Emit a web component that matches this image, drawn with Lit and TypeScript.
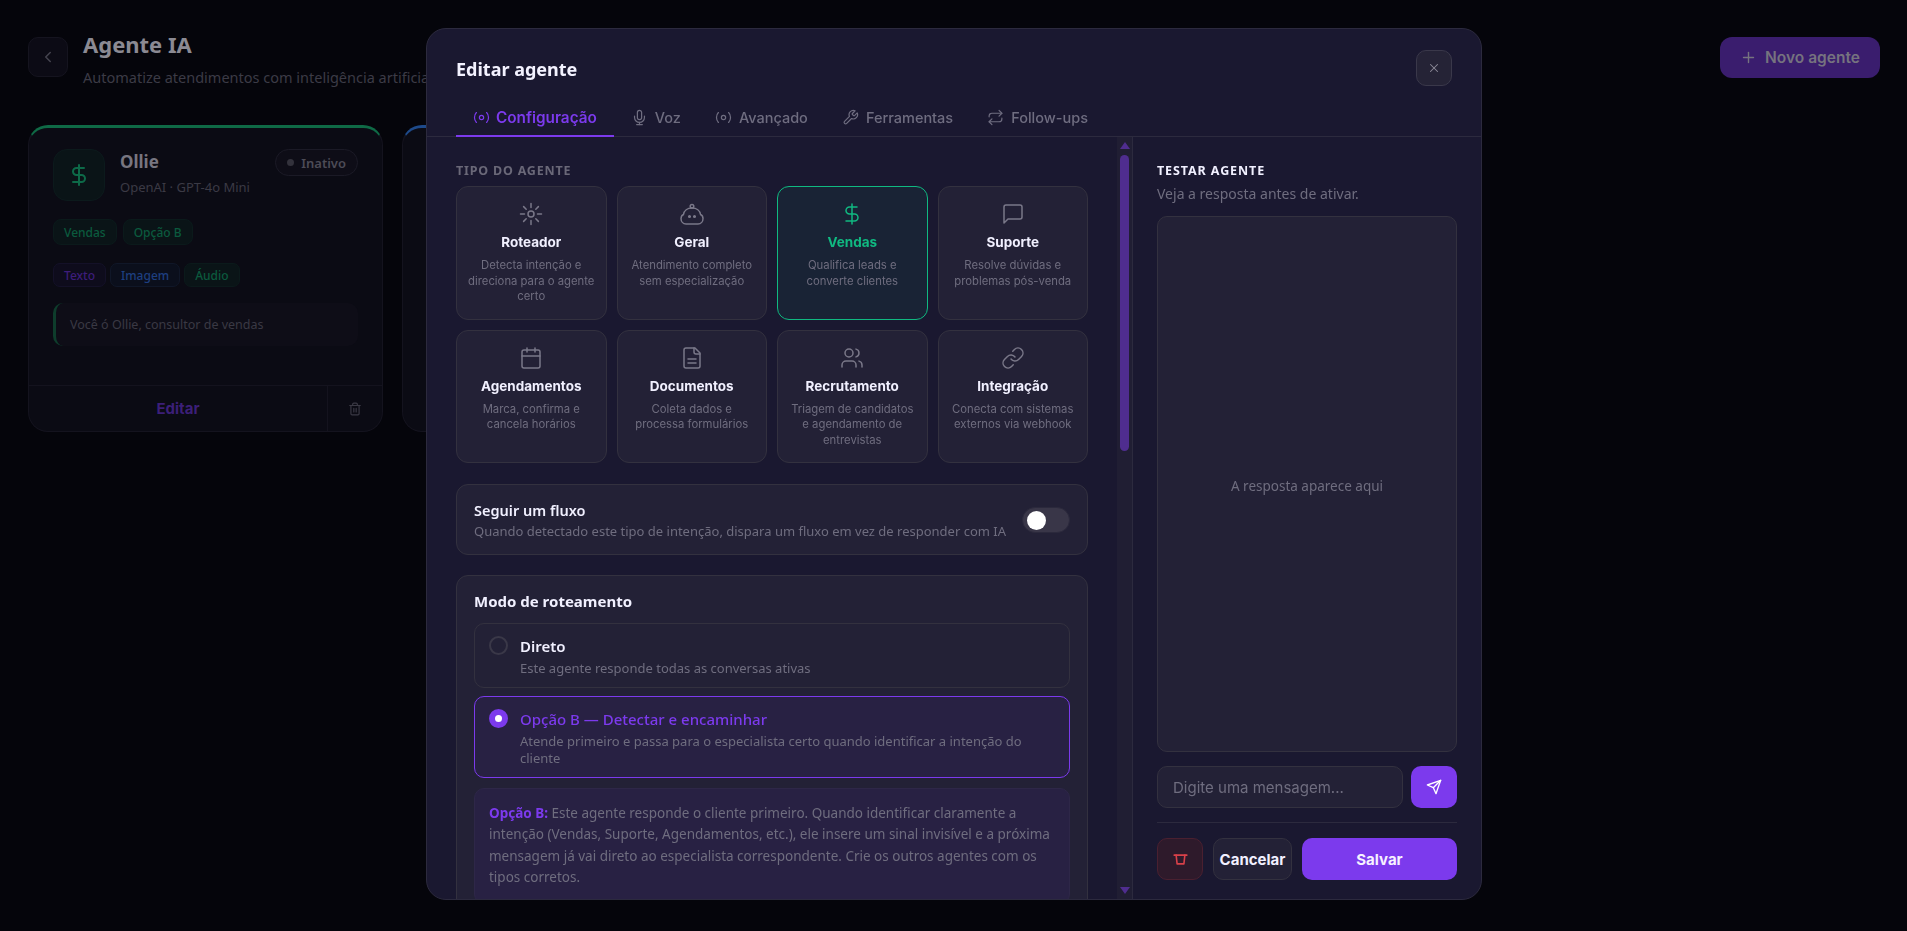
import { LitElement, html, css, svg } from "lit";
import { customElement } from "lit/decorators.js";

const I = {
  radio: svg`<circle cx="12" cy="12" r="3"/><path d="M4.800 5c-3.600 3.600-3.600 10.400 0 14"/><path d="M19.200 5c3.600 3.600 3.600 10.400 0 14"/>`,
  mic: svg`<path d="M12 2a3 3 0 0 0-3 3v7a3 3 0 0 0 6 0V5a3 3 0 0 0-3-3Z"/><path d="M19 10v2a7 7 0 0 1-14 0v-2"/><path d="M12 19v3"/><path d="M8 22h8"/>`,
  wrench: svg`<path d="M14.700 6.300a1 1 0 0 0 0 1.400l1.600 1.600a1 1 0 0 0 1.400 0l3.770-3.770a6 6 0 0 1-7.940 7.940l-6.910 6.910a2.120 2.120 0 0 1-3-3l6.910-6.910a6 6 0 0 1 7.940-7.940l-3.760 3.760z"/>`,
  repeat: svg`<path d="m17 2 4 4-4 4"/><path d="M3 11v-1a4 4 0 0 1 4-4h14"/><path d="m7 22-4-4 4-4"/><path d="M21 13v1a4 4 0 0 1-4 4H3"/>`,
  sun: svg`<circle cx="12" cy="12" r="3"/><path d="M12 1.500v4M12 18.500v4M1.500 12h4M18.500 12h4M4.600 4.600l2.600 2.600M16.800 16.800l2.600 2.600M4.600 19.400l2.600-2.600M16.800 7.200l2.600-2.600"/>`,
  robot: svg`<circle cx="12" cy="4.200" r="1.800"/><path d="M3.500 12.500C4 8.500 7.500 6 12 6s8 2.500 8.500 6.500c1.300.6 2.500 1.800 2.500 4 0 3-2 5.500-5 5.500H6c-3 0-5-2.500-5-5.500 0-2.200 1.200-3.400 2.500-4z"/><circle cx="9.500" cy="14.500" r=".8" class="dot"/><circle cx="14.500" cy="14.500" r=".8" class="dot"/>`,
  dollar: svg`<path d="M12 2v20"/><path d="M17 5H9.500a3.500 3.500 0 0 0 0 7h5a3.500 3.500 0 0 1 0 7H6"/>`,
  msg: svg`<path d="M21 15a2 2 0 0 1-2 2H7l-4 4V5a2 2 0 0 1 2-2h14a2 2 0 0 1 2 2z"/>`,
  cal: svg`<rect x="3" y="4" width="18" height="18" rx="2"/><path d="M8 2v4M16 2v4M3 10h18"/>`,
  file: svg`<path d="M15 2H6a2 2 0 0 0-2 2v16a2 2 0 0 0 2 2h12a2 2 0 0 0 2-2V7Z"/><path d="M14 2v4a2 2 0 0 0 2 2h4"/><path d="M16 13H8"/><path d="M16 17H8"/>`,
  users: svg`<path d="M16 21v-2a4 4 0 0 0-4-4H6a4 4 0 0 0-4 4v2"/><circle cx="9" cy="7" r="4"/><path d="M22 21v-2a4 4 0 0 0-3-3.870"/><path d="M16 3.130a4 4 0 0 1 0 7.750"/>`,
  link: svg`<path d="M10 13a5 5 0 0 0 7.540.540l3-3a5 5 0 0 0-7.070-7.070l-1.720 1.710"/><path d="M14 11a5 5 0 0 0-7.540-.540l-3 3a5 5 0 0 0 7.070 7.070l1.710-1.710"/>`,
  x: svg`<path d="M18 6 6 18"/><path d="m6 6 12 12"/>`,
  send: svg`<path d="m22 2-7 20-4-9-9-4Z"/><path d="M22 2 11 13"/>`,
  cup: svg`<path d="M4 6.500h16"/><path d="M6.500 6.500l1.200 11h8.600l1.200-11"/>`,
  chevron: svg`<path d="m15 18-6-6 6-6"/>`,
  plus: svg`<path d="M5 12h14"/><path d="M12 5v14"/>`,
  trash: svg`<path d="M3 6h18"/><path d="M19 6v14a2 2 0 0 1-2 2H7a2 2 0 0 1-2-2V6"/><path d="M8 6V4a2 2 0 0 1 2-2h4a2 2 0 0 1 2 2v2"/><path d="M10 11v6M14 11v6"/>`,
};

const icon = (p: unknown, size: number, sw = 2) =>
  html`<svg class="ic" width=${size} height=${size} viewBox="0 0 24 24" fill="none" stroke="currentColor" stroke-width=${sw} stroke-linecap="round" stroke-linejoin="round">${p}</svg>`;

const TABS = [
  ["Configuração", I.radio],
  ["Voz", I.mic],
  ["Avançado", I.radio],
  ["Ferramentas", I.wrench],
  ["Follow-ups", I.repeat],
] as const;

const TYPES = [
  ["Roteador", "Detecta intenção e direciona para o agente certo", I.sun],
  ["Geral", "Atendimento completo sem especialização", I.robot],
  ["Vendas", "Qualifica leads e converte clientes", I.dollar],
  ["Suporte", "Resolve dúvidas e problemas pós-venda", I.msg],
  ["Agendamentos", "Marca, confirma e cancela horários", I.cal],
  ["Documentos", "Coleta dados e processa formulários", I.file],
  ["Recrutamento", "Triagem de candidatos e agendamento de entrevistas", I.users],
  ["Integração", "Conecta com sistemas externos via webhook", I.link],
] as const;

@customElement("app-root")
export class AppRoot extends LitElement {
  static styles = css`
    :host {
      display: block;
      height: 931px;
      overflow: hidden;
      background: #05050b;
      font-family: "Noto Sans", sans-serif;
      color: #f1f0ff;
    }
    * { box-sizing: border-box; }
    .ic { display: block; flex: none; }
    .ic .dot { fill: currentColor; }

    /* page behind the dialog */
    .page { padding: 37px 27px 0 28px; }
    .top { display: flex; align-items: flex-start; gap: 15px; }
    .back {
      width: 40px; height: 40px; border-radius: 10px; background: #0c0b15; border: 1px solid #15141f;
      display: flex; align-items: center; justify-content: center; color: #45444f;
    }
    .head { flex: 1; margin-top: -8px; }
    .head h1 { margin: 0; font-size: 22px; line-height: 30px; font-weight: 700; color: #8b8a93; }
    .head p { margin: 8px 0 0; font-size: 14.500px; line-height: 20px; color: #3c3b46; }
    .new {
      width: 160px; height: 41px; border-radius: 12px; background: #3a1d6e; color: #76737f;
      display: flex; align-items: center; justify-content: center; gap: 8px;
      font: 600 15.500px "Inter", sans-serif;
    }
    .cards { display: grid; grid-template-columns: 355px 355px; gap: 19px; margin-top: 38px; }
    .card {
      height: 307px; border-radius: 20px; background: #0b0b14; border: 1px solid #14131e;
      border-top: 3px solid #0f6a46; display: flex; flex-direction: column;
    }
    .card.blue { border-top-color: #1e4a8a; }
    .card-main { flex: 1; padding: 21px 24px 0; }
    .who { display: flex; gap: 15px; align-items: flex-start; }
    .avatar {
      width: 52px; height: 52px; border-radius: 14px; background: #0a1417; border: 1px solid #0c1a1c;
      display: flex; align-items: center; justify-content: center; color: #0d6a48;
    }
    .who-text { flex: 1; }
    .who-text b { display: block; font-size: 17px; line-height: 24px; margin-top: 1px; color: #787680; }
    .who-text span { display: block; font-size: 13px; line-height: 20px; margin-top: 3px; color: #3b3a45; }
    .badge {
      height: 27px; padding: 0 11px; border-radius: 14px; border: 1px solid #1b1a26; background: #0e0d17;
      display: flex; align-items: center; gap: 7px; font-size: 13px; font-weight: 600; color: #4c4b56;
    }
    .badge i { width: 7px; height: 7px; border-radius: 50%; background: #33323c; }
    .tags { display: flex; gap: 6px; margin-top: 18px; }
    .tag {
      height: 26px; padding: 0 10px; border-radius: 8px; font-size: 12px; display: flex; align-items: center;
      color: #0b5a3e; background: #0a1417; border: 1px solid #0b1a1b; font-weight: 500;
    }
    .tags.small { gap: 4px; margin-top: 18px; }
    .tags.small .tag { height: 24px; padding: 0 10px; border-radius: 7px; }
    .tag.p { color: #3d1d7a; background: #0e0c1c; border-color: #141128; }
    .tag.b { color: #1e3f80; background: #0b0f1c; border-color: #101728; }
    .prompt {
      margin-top: 16px; height: 43px; border-radius: 10px; background: #0e0d17; border-left: 3px solid #0e3d2c;
      padding-left: 14px; display: flex; align-items: center; font-size: 12.500px; color: #3a3944;
    }
    .card-foot { height: 46px; border-top: 1px solid #14131e; display: flex; }
    .edit {
      flex: 1; display: flex; align-items: center; justify-content: center; color: #3c1f78;
      font: 700 15px "Inter", sans-serif;
    }
    .del { width: 55px; border-left: 1px solid #14131e; display: flex; align-items: center; justify-content: center; color: #3b3a45; }

    /* dialog */
    .modal {
      position: fixed; left: 426px; top: 28px; width: 1056px; height: 872px;
      background: #1a1830; border: 1px solid #2c2a3e; border-radius: 20px; overflow: hidden;
      display: flex; flex-direction: column;
    }
    .m-head { display: flex; align-items: flex-start; justify-content: space-between; padding: 21px 29px 0; }
    .m-head h2 { margin: 0; padding-top: 7px; font-size: 18px; line-height: 24px; font-weight: 700; color: #f3f2ff; }
    .close {
      width: 36px; height: 36px; border-radius: 10px; background: #252336; border: 1px solid #3a384a;
      display: flex; align-items: center; justify-content: center; color: #8c8a99;
    }
    .tabs { display: flex; padding: 0 29px; border-bottom: 1px solid #2c2a3e; margin-top: 16px; height: 35px; }
    .tab {
      display: flex; align-items: center; gap: 7px; padding: 0 17px 2px; color: #6f6d80; margin-bottom: -1px;
      font: 500 14.500px "Inter", sans-serif; white-space: nowrap; border-bottom: 2px solid transparent;
    }
    .tab.on { color: #7c3aed; border-bottom-color: #7c3aed; font-weight: 600; font-size: 15.300px; gap: 6px; }
    .m-body { flex: 1; min-height: 0; display: grid; grid-template-columns: 1fr 348px; }
    .left { display: flex; min-height: 0; overflow: hidden; border-right: 1px solid #2c2a3e; }
    .pane { flex: 1; min-width: 0; overflow: hidden; padding: 26px 29px 0; }
    .sb { flex: none; width: 15px; background: #201e33; display: flex; flex-direction: column; align-items: center; padding: 5px 0; }
    .sb .up, .sb .down { width: 0; height: 0; border-left: 5px solid transparent; border-right: 5px solid transparent; }
    .sb .up { border-bottom: 7px solid #4f2d8f; }
    .sb .down { border-top: 7px solid #4f2d8f; margin-top: auto; }
    .sb .thumb { width: 9px; height: 296px; margin-top: 6px; border-radius: 5px; background: #4f2d8f; }
    .label { font-size: 12.500px; line-height: 16px; font-weight: 700; letter-spacing: .8px; text-transform: uppercase; color: #6a6878; }
    .grid { display: grid; grid-template-columns: repeat(4, 1fr); grid-auto-rows: 133.500px; gap: 10px; margin-top: 7px; }
    .type {
      border: 1px solid #33313f; border-radius: 12px; background: #232136; padding: 15px 10px 0;
      display: flex; flex-direction: column; align-items: center; text-align: center; color: #7a7889;
    }
    .type.on { background: #192335; border-color: #10b981; color: #10b981; }
    .type b { margin-top: 7px; font: 700 13.500px/18px "Inter", sans-serif; color: #f1f0ff; }
    .type.on b { color: #10b981; }
    .type small { margin-top: 7px; font: 400 11.300px/15.700px "Inter", sans-serif; color: #6f6d7f; }
    .flow {
      margin-top: 21px; height: 71px; border: 1px solid #33313f; border-radius: 12px; background: #232136;
      padding: 0 17px 0 17px; display: flex; align-items: center; justify-content: space-between;
    }
    .flow b { display: block; font-size: 14.500px; line-height: 20px; font-weight: 600; color: #f1f0ff; margin-top: 1px; }
    .flow span { display: block; font-size: 13px; line-height: 18px; margin-top: 2px; color: #6f6d7f; }
    .switch { width: 48px; height: 26px; border-radius: 13px; background: #393648; border: 1px solid #2b293c; padding: 3px 4px; flex: none; }
    .switch i { display: block; width: 19px; height: 19px; border-radius: 50%; background: #fff; }
    .mode {
      margin-top: 20px; border: 1px solid #33313f; border-radius: 12px; background: #232136; padding: 15px 17px 30px;
    }
    .mode > h3 { margin: 0 0 12px; font-size: 15px; line-height: 20px; font-weight: 700; color: #f1f0ff; }
    .opt {
      display: flex; gap: 12px; border: 1px solid #33313f; border-radius: 10px; padding: 12px 14px 9px; margin-bottom: 8px;
    }
    .opt.on { border-color: #7c3aed; background: #282143; }
    .dotr { width: 19px; height: 19px; border-radius: 50%; border: 2px solid #3a3848; flex: none; display: flex; align-items: center; justify-content: center; }
    .opt.on .dotr { background: #7c3aed; border-color: #7c3aed; }
    .opt.on .dotr i { width: 7px; height: 7px; border-radius: 50%; background: #fff; }
    .opt-t b { display: block; font-size: 15px; line-height: 20px; font-weight: 600; color: #f1f0ff; }
    .opt.on .opt-t b { color: #7c3aed; font-weight: 500; }
    .opt-t span { display: block; font-size: 13px; line-height: 17.500px; margin-top: 4px; color: #6f6d7f; }
    .note {
      border: 1px solid #2e2748; background: #282143; border-radius: 10px; padding: 14px 14px; margin-top: 10px;
      font-size: 13.500px; line-height: 21.600px; color: #6f6d7f;
    }
    .note b { color: #7c3aed; font-weight: 700; }

    .right { padding: 25px 24px 19px; display: flex; flex-direction: column; min-height: 0; }
    .right .label2 { font-size: 12.500px; line-height: 16px; font-weight: 700; letter-spacing: .9px; text-transform: uppercase; color: #f1f0ff; margin-top: 1px; }
    .right p { margin: 6px 0 0; font-size: 14px; line-height: 18px; color: #6f6d7f; }
    .chat {
      flex: 1; margin-top: 13px; padding-top: 3px; border: 1px solid #33313f; border-radius: 10px; background: #232136;
      display: flex; align-items: center; justify-content: center; font-size: 13.500px; color: #6f6d7f;
    }
    .send-row { display: flex; gap: 8px; margin-top: 14px; }
    .input {
      flex: 1; height: 42px; border: 1px solid #33313f; border-radius: 10px; background: #232136; padding: 0 15px;
      display: flex; align-items: center; font: 400 15px "Inter", sans-serif; color: #6f6d7f;
    }
    .send { width: 46px; height: 42px; border-radius: 10px; background: #7c3aed; color: #fff; display: flex; align-items: center; justify-content: center; }
    .acts { display: flex; gap: 10px; margin-top: 14px; padding-top: 15px; border-top: 1px solid #2c2a3e; }
    .btn { height: 42px; border-radius: 10px; display: flex; align-items: center; justify-content: center; font: 700 15px "Inter", sans-serif; }
    .trash { width: 46px; background: #2e1a2b; border: 1px solid #4a2030; color: #d9414a; }
    .cancel { width: 79px; background: #232136; border: 1px solid #33313f; color: #f1f0ff; }
    .save { flex: 1; background: #7c3aed; color: #f6f2ff; }
  `;

  render() {
    return html`
      <div class="page">
        <div class="top">
          <div class="back">${icon(I.chevron, 18)}</div>
          <div class="head">
            <h1>Agente IA</h1>
            <p>Automatize atendimentos com inteligência artificial</p>
          </div>
          <div class="new">${icon(I.plus, 17)}Novo agente</div>
        </div>
        <div class="cards">
          <div class="card">
            <div class="card-main">
              <div class="who">
                <div class="avatar">${icon(I.dollar, 24)}</div>
                <div class="who-text"><b>Ollie</b><span>OpenAI · GPT-4o Mini</span></div>
                <div class="badge"><i></i>Inativo</div>
              </div>
              <div class="tags"><div class="tag">Vendas</div><div class="tag">Opção B</div></div>
              <div class="tags small">
                <div class="tag p">Texto</div><div class="tag b">Imagem</div><div class="tag">Áudio</div>
              </div>
              <div class="prompt">Você ó Ollie, consultor de vendas</div>
            </div>
            <div class="card-foot"><div class="edit">Editar</div><div class="del">${icon(I.trash, 14)}</div></div>
          </div>
          <div class="card blue"></div>
        </div>
      </div>

      <div class="modal">
        <div class="m-head">
          <h2>Editar agente</h2>
          <div class="close">${icon(I.x, 14, 1.8)}</div>
        </div>
        <div class="tabs">
          ${TABS.map(([t, p], i) => html`<div class="tab ${i === 0 ? "on" : ""}">${icon(p, 17, 1.7)}${t}</div>`)}
        </div>
        <div class="m-body">
          <div class="left">
            <div class="pane">
              <div class="label">Tipo do agente</div>
              <div class="grid">
                ${TYPES.map(([t, d, p]) => html`
                  <div class="type ${t === "Vendas" ? "on" : ""}">
                    ${icon(p, 24, 1.5)}
                    <b>${t}</b>
                    <small>${d}</small>
                  </div>`)}
              </div>
              <div class="flow">
                <div>
                  <b>Seguir um fluxo</b>
                  <span>Quando detectado este tipo de intenção, dispara um fluxo em vez de responder com IA</span>
                </div>
                <div class="switch"><i></i></div>
              </div>
              <div class="mode">
                <h3>Modo de roteamento</h3>
                <div class="opt">
                  <div class="dotr"></div>
                  <div class="opt-t"><b>Direto</b><span>Este agente responde todas as conversas ativas</span></div>
                </div>
                <div class="opt on">
                  <div class="dotr"><i></i></div>
                  <div class="opt-t"><b>Opção B — Detectar e encaminhar</b><span>Atende primeiro e passa para o especialista certo quando identificar a intenção do cliente</span></div>
                </div>
                <div class="note"><b>Opção B:</b> Este agente responde o cliente primeiro. Quando identificar claramente a intenção (Vendas, Suporte, Agendamentos, etc.), ele insere um sinal invisível e a próxima mensagem já vai direto ao especialista correspondente. Crie os outros agentes com os tipos corretos.</div>
              </div>
            </div>
            <div class="sb"><div class="up"></div><div class="thumb"></div><div class="down"></div></div>
          </div>
          <div class="right">
            <div class="label2">Testar agente</div>
            <p>Veja a resposta antes de ativar.</p>
            <div class="chat">A resposta aparece aqui</div>
            <div class="send-row">
              <div class="input">Digite uma mensagem...</div>
              <div class="send">${icon(I.send, 16)}</div>
            </div>
            <div class="acts">
              <div class="btn trash">${icon(I.cup, 19, 2)}</div>
              <div class="btn cancel">Cancelar</div>
              <div class="btn save">Salvar</div>
            </div>
          </div>
        </div>
      </div>
    `;
  }
}
